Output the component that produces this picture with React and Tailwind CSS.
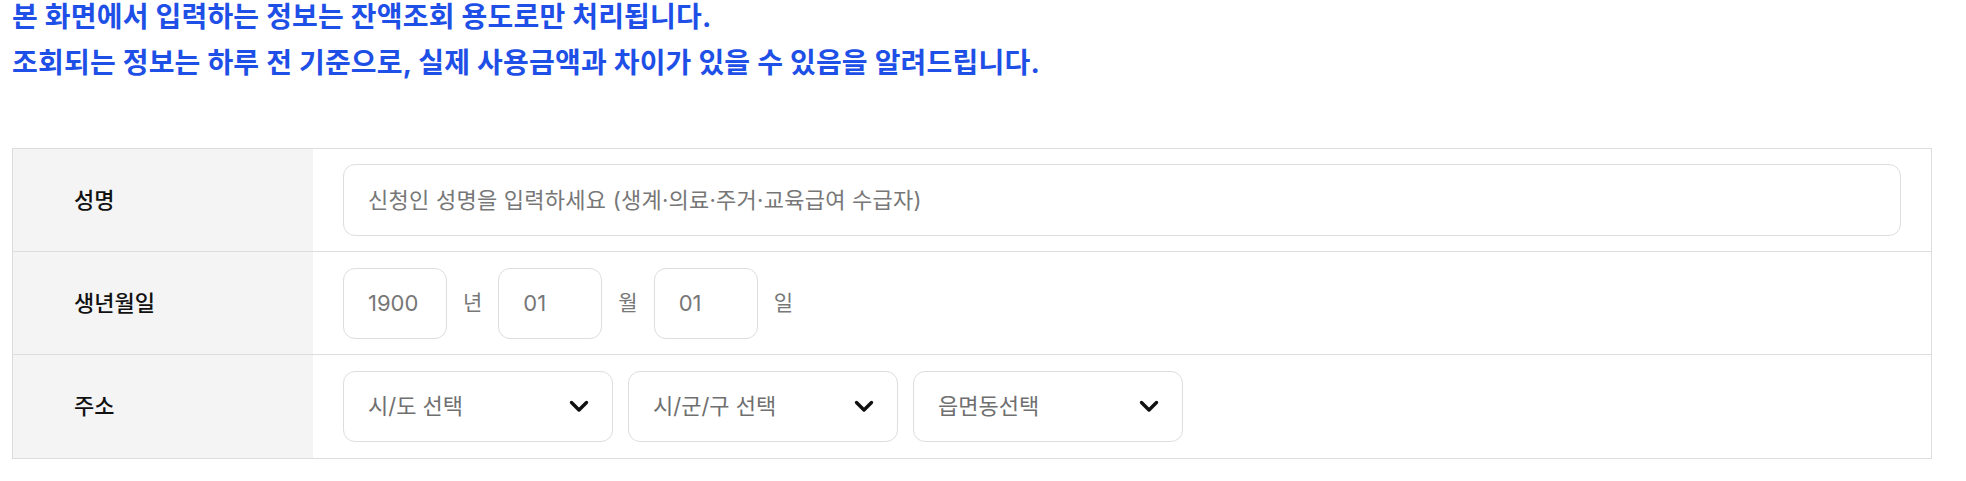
import { useState } from "react";

const font = "font-['Inter','Noto_Sans_CJK_KR',sans-serif]";

function Chevron() {
  return (
    <svg className="w-[20px] h-[13px] shrink-0" viewBox="0 0 20 13" fill="none">
      <path
        d="M2.5 2.5l7.5 7.5 7.5-7.5"
        stroke="#111"
        strokeWidth={3.4}
        strokeLinecap="round"
        strokeLinejoin="round"
      />
    </svg>
  );
}

function SelectBox({ label }) {
  return (
    <button className="flex items-center justify-between w-[270px] h-[71px] pl-6 pr-[23px] rounded-[12px] border border-[#dddddd] bg-white text-[22px] text-[#6f6f6f]">
      <span>{label}</span>
      <Chevron />
    </button>
  );
}

function Row({ label, children, last }) {
  return (
    <div className={`flex h-[103px] ${last ? "" : "border-b border-[#dddddd]"}`}>
      <div className="w-[300px] shrink-0 bg-[#f4f4f4] flex items-center pl-[61px] text-[22px] font-medium text-[#111]">
        {label}
      </div>
      <div className="flex-1 flex items-center px-[30px] bg-white">{children}</div>
    </div>
  );
}

function DateBox({ value }) {
  return (
    <div className="w-[104px] h-[71px] pl-6 flex items-center rounded-[12px] border border-[#dddddd] text-[22px] text-[#777]">
      {value}
    </div>
  );
}

export default function App() {
  const [name, setName] = useState("");

  return (
    <div className={`${font} bg-white min-h-[481px] px-3`}>
      {/* Notice */}
      <div className="text-[28px] font-bold text-[#1e4fe6] tracking-[0.2px]">
        <p className="leading-[34px]">본 화면에서 입력하는 정보는 잔액조회 용도로만 처리됩니다.</p>
        <p className="leading-[34px] mt-3">
          조회되는 정보는 하루 전 기준으로, 실제 사용금액과 차이가 있을 수 있음을 알려드립니다.
        </p>
      </div>

      {/* Form table */}
      <div className="mt-[68px] w-[1920px] border border-[#dddddd]">
        <Row label="성명">
          <input
            value={name}
            onChange={(e) => setName(e.target.value)}
            placeholder="신청인 성명을 입력하세요 (생계·의료·주거·교육급여 수급자)"
            className="w-full h-[72px] px-6 rounded-[12px] border border-[#dddddd] text-[22px] tracking-[0.25px] text-[#333] placeholder:text-[#777] outline-none"
          />
        </Row>
        <Row label="생년월일">
          <div className="flex items-center text-[21px] text-[#777]">
            <DateBox value="1900" />
            <span className="mx-4">년</span>
            <DateBox value="01" />
            <span className="mx-4">월</span>
            <DateBox value="01" />
            <span className="mx-4">일</span>
          </div>
        </Row>
        <Row label="주소" last>
          <div className="flex items-center gap-[15px]">
            <SelectBox label="시/도 선택" />
            <SelectBox label="시/군/구 선택" />
            <SelectBox label="읍면동선택" />
          </div>
        </Row>
      </div>
    </div>
  );
}
